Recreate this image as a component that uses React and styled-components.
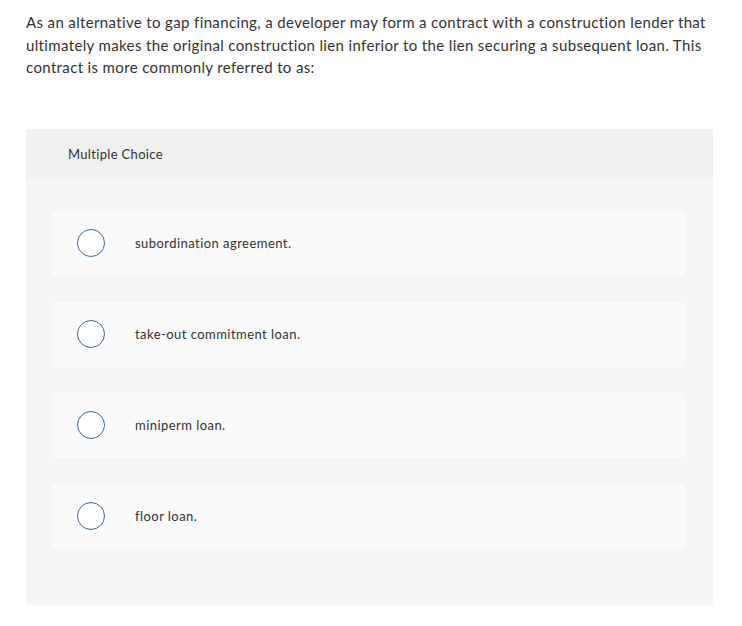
import React from "react";
import styled, { createGlobalStyle } from "styled-components";

const Global = createGlobalStyle`
  html, body { margin: 0; padding: 0; background: #fff; }
  body { font-family: Lato, "Open Sans", sans-serif; color: #333; }
`;

const Page = styled.div`
  padding: 11px 29px 0 26px;
  width: 687px;
`;

const Question = styled.p`
  margin: 0;
  font-size: 15px;
  line-height: 22.5px;
  letter-spacing: 0.36px;
  color: #333;
`;

const Panel = styled.section`
  margin-top: 50px;
  background: #f5f5f5;
  border-radius: 3px;
  overflow: hidden;
`;

const Header = styled.div`
  height: 50px;
  background: #f0f0f0;
  display: flex;
  align-items: center;
  padding-left: 42px;
  font-size: 13px;
  letter-spacing: 0.33px;
  color: #333;
`;

const Options = styled.div`
  display: flex;
  flex-direction: column;
  gap: 26px;
  padding: 32px 28px 56px 26px;
`;

const Option = styled.label`
  display: flex;
  align-items: center;
  height: 65px;
  background: #fafafa;
  border-radius: 3px;
  padding-left: 25px;
  cursor: pointer;
`;

const Radio = styled.span`
  width: 26px;
  height: 26px;
  border-radius: 50%;
  border: 1px solid #3d6794;
  background: #fff;
  flex: none;
`;

const OptionText = styled.span`
  margin-left: 30px;
  font-size: 13px;
  letter-spacing: 0.45px;
  color: #333;
`;

const options = [
  "subordination agreement.",
  "take-out commitment loan.",
  "miniperm loan.",
  "floor loan.",
];

export default function App() {
  return (
    <>
      <Global />
      <Page>
        <Question>
          As an alternative to gap financing, a developer may form a contract with a construction lender that
          ultimately makes the original construction lien inferior to the lien securing a subsequent loan. This
          contract is more commonly referred to as:
        </Question>
        <Panel>
          <Header>Multiple Choice</Header>
          <Options>
            {options.map((o) => (
              <Option key={o}>
                <Radio />
                <OptionText>{o}</OptionText>
              </Option>
            ))}
          </Options>
        </Panel>
      </Page>
    </>
  );
}
